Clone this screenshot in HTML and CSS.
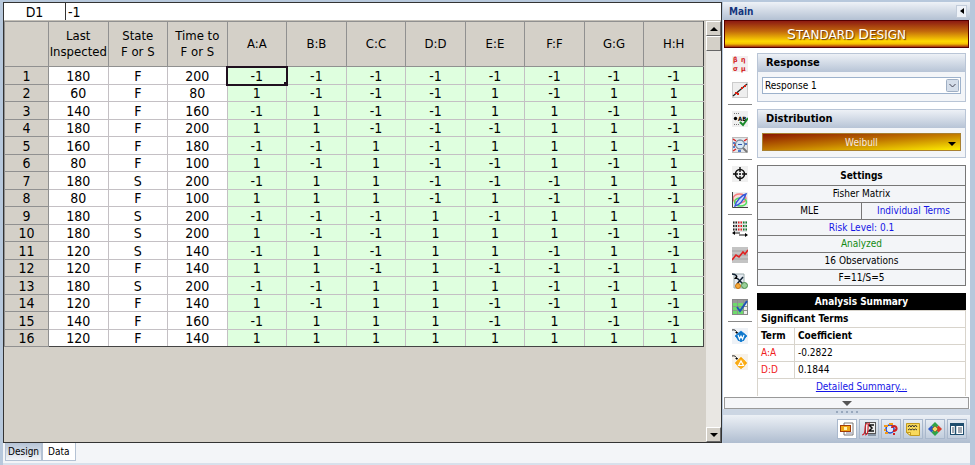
FILE: index.html
```html
<!DOCTYPE html>
<html lang="en">
<head>
  <meta charset="utf-8">
  <title>Standard Design</title>
  <link rel="stylesheet" href="styles.css">
</head>
<body>
  <div class="window">
    <div class="main">
      <section class="sheet">
        <div class="formula-bar">
          <label class="cell-name" for="formula">D1</label>
          <input class="formula" id="formula" type="text" value="-1">
        </div>
        <div class="sheet-body">
          <div class="grid-area">
            <table class="grid">
              <thead>
                <tr><th class="corner"></th><th>Last<br>Inspected</th><th>State<br>F or S</th><th>Time to<br>F or S</th><th>A:A</th><th>B:B</th><th>C:C</th><th>D:D</th><th>E:E</th><th>F:F</th><th>G:G</th><th>H:H</th></tr>
              </thead>
              <tbody>
                <tr><th>1</th><td>180</td><td>F</td><td>200</td><td class="selected">-1</td><td>-1</td><td>-1</td><td>-1</td><td>-1</td><td>-1</td><td>-1</td><td>-1</td></tr>
                <tr><th>2</th><td>60</td><td>F</td><td>80</td><td>1</td><td>-1</td><td>-1</td><td>-1</td><td>1</td><td>-1</td><td>1</td><td>1</td></tr>
                <tr><th>3</th><td>140</td><td>F</td><td>160</td><td>-1</td><td>1</td><td>-1</td><td>-1</td><td>1</td><td>1</td><td>-1</td><td>1</td></tr>
                <tr><th>4</th><td>180</td><td>F</td><td>200</td><td>1</td><td>1</td><td>-1</td><td>-1</td><td>-1</td><td>1</td><td>1</td><td>-1</td></tr>
                <tr><th>5</th><td>160</td><td>F</td><td>180</td><td>-1</td><td>-1</td><td>1</td><td>-1</td><td>1</td><td>1</td><td>1</td><td>-1</td></tr>
                <tr><th>6</th><td>80</td><td>F</td><td>100</td><td>1</td><td>-1</td><td>1</td><td>-1</td><td>-1</td><td>1</td><td>-1</td><td>1</td></tr>
                <tr><th>7</th><td>180</td><td>S</td><td>200</td><td>-1</td><td>1</td><td>1</td><td>-1</td><td>-1</td><td>-1</td><td>1</td><td>1</td></tr>
                <tr><th>8</th><td>80</td><td>F</td><td>100</td><td>1</td><td>1</td><td>1</td><td>-1</td><td>1</td><td>-1</td><td>-1</td><td>-1</td></tr>
                <tr><th>9</th><td>180</td><td>S</td><td>200</td><td>-1</td><td>-1</td><td>-1</td><td>1</td><td>-1</td><td>1</td><td>1</td><td>1</td></tr>
                <tr><th>10</th><td>180</td><td>S</td><td>200</td><td>1</td><td>-1</td><td>-1</td><td>1</td><td>1</td><td>1</td><td>-1</td><td>-1</td></tr>
                <tr><th>11</th><td>120</td><td>S</td><td>140</td><td>-1</td><td>1</td><td>-1</td><td>1</td><td>1</td><td>-1</td><td>1</td><td>-1</td></tr>
                <tr><th>12</th><td>120</td><td>F</td><td>140</td><td>1</td><td>1</td><td>-1</td><td>1</td><td>-1</td><td>-1</td><td>-1</td><td>1</td></tr>
                <tr><th>13</th><td>180</td><td>S</td><td>200</td><td>-1</td><td>-1</td><td>1</td><td>1</td><td>1</td><td>-1</td><td>-1</td><td>1</td></tr>
                <tr><th>14</th><td>120</td><td>F</td><td>140</td><td>1</td><td>-1</td><td>1</td><td>1</td><td>-1</td><td>-1</td><td>1</td><td>-1</td></tr>
                <tr><th>15</th><td>140</td><td>F</td><td>160</td><td>-1</td><td>1</td><td>1</td><td>1</td><td>-1</td><td>1</td><td>-1</td><td>-1</td></tr>
                <tr><th>16</th><td>120</td><td>F</td><td>140</td><td>1</td><td>1</td><td>1</td><td>1</td><td>1</td><td>1</td><td>1</td><td>1</td></tr>
              </tbody>
            </table>
          </div>
          <div class="scrollbar">
            <button class="scroll-button" aria-label="Scroll up"><svg width="8" height="4"><path d="M4 0L8 4H0z"/></svg></button>
            <div class="scroll-thumb"></div>
            <div class="scroll-track"></div>
            <button class="scroll-button" aria-label="Scroll down"><svg width="8" height="4"><path d="M0 0H8L4 4z"/></svg></button>
          </div>
        </div>
      </section>

      <aside class="panel">
        <header class="panel-title">
          <span>Main</span>
          <button class="collapse" aria-label="Collapse"><svg width="4" height="6"><path d="M4 0V6L0 3z"/></svg></button>
        </header>
        <h1 class="banner"><span class="cap">S</span>tandard <span class="cap">D</span>esign</h1>

        <div class="panel-body">
          <nav class="tools">
            <button class="tool" aria-label="Parameters">
              <svg width="16" height="18" viewBox="0 0 16 18"><rect y="1" width="16" height="16" fill="#f3efef"/><g class="greek"><text x="1" y="7">β</text><text x="9" y="7">η</text><text x="1" y="16">σ</text><text x="9" y="16">μ</text></g></svg>
            </button>
            <button class="tool" aria-label="Plot">
              <svg width="16" height="16" viewBox="0 0 16 16"><rect x=".5" y=".5" width="15" height="15" fill="#eee" stroke="#ccc"/><path d="M1 14L15 2" stroke="#222" stroke-width="1.3"/><path d="M3 10h2v2H3zM5 11h2v2H5zM9 5h2v2H9zM12 3h2v2h-2z" fill="#d21"/></svg>
            </button>
            <hr>
            <button class="tool" aria-label="Select terms">
              <svg width="16" height="16" viewBox="0 0 16 16"><rect width="16" height="16" fill="#f0f0f0"/><path d="M2 2.500h6M2 13.500h5" stroke="#777" stroke-dasharray="1 1"/><circle cx="3.500" cy="7.500" r="1.700"/><text class="ab" x="6" y="10">AB</text><path d="M8 11l3 3 5-7" fill="none" stroke="#1b8a2b" stroke-width="2"/></svg>
            </button>
            <button class="tool" aria-label="Inspect design">
              <svg width="16" height="16" viewBox="0 0 16 16"><rect x=".5" y=".5" width="15" height="15" fill="#e3e6ea" stroke="#bbb"/><path d="M1 2l3 2M15 2l-3 2M1 14l3-2M2 8h2" stroke="#d22" stroke-width="1.500"/><path d="M1 6h2M13 7h2M1 10h2M6 14h3" stroke="#25b" stroke-width="1.500"/><circle cx="8" cy="7.500" r="4.500" fill="#d5e8f5" stroke="#567"/><path d="M6 7.500h4" stroke="#35a"/><path d="M11 11l4 4" stroke="#777" stroke-width="2"/></svg>
            </button>
            <hr>
            <button class="tool" aria-label="Target">
              <svg width="16" height="16" viewBox="0 0 16 16"><rect width="16" height="16" fill="#f0f0f0"/><circle cx="8" cy="8" r="4.500" fill="none" stroke="#111" stroke-width="1.600"/><path d="M8 1v5M8 10v5M1 8h5M10 8h5" stroke="#111" stroke-width="1.400"/><circle cx="8" cy="8" r="1"/></svg>
            </button>
            <button class="tool" aria-label="Contour plot">
              <svg width="16" height="16" viewBox="0 0 16 16"><rect width="16" height="16" fill="#eee"/><ellipse cx="7.500" cy="6.500" rx="6.500" ry="4.500" fill="#fbdada" stroke="#f47f7f" stroke-width="1.500"/><ellipse cx="8.500" cy="10" rx="6" ry="4" fill="none" stroke="#51dc5b" stroke-width="1.500"/><path d="M3 14C4 9 10 3 14 2C12 7 8 13 3 14z" fill="#cdf" stroke="#3457d8" stroke-width="1.400"/><path d="M.5 0v15.500H16" fill="none" stroke="#444"/></svg>
            </button>
            <hr>
            <button class="tool" aria-label="Transfer columns">
              <svg width="16" height="16" viewBox="0 0 16 16"><rect x="1" width="14" height="11" fill="#e4e4e4"/><path d="M1 1.500h4M1 5h4M1 8.500h4" stroke="#222" stroke-width="2" stroke-dasharray="1.500 1"/><path d="M6 1.500h4M6 5h4M6 8.500h4" stroke="#d22" stroke-width="2" stroke-dasharray="1.500 1"/><path d="M11 1.500h4M11 5h4M11 8.500h4" stroke="#187a30" stroke-width="2" stroke-dasharray="1.500 1"/><path d="M2 12h6M7 14h7" stroke="#111"/><path d="M3 10v4L0 12zM13 12v4l3-2z"/></svg>
            </button>
            <button class="tool" aria-label="Trend">
              <svg width="16" height="16" viewBox="0 0 16 16"><rect width="16" height="16" fill="#c4c4c4"/><path d="M0 4h16M0 8h16M0 12h16" stroke="#a4a4a4"/><path d="M0 13l4-5 3 2 4-5 2 2 3-4" fill="none" stroke="#e02020" stroke-width="1.600"/></svg>
            </button>
            <button class="tool" aria-label="Transfer to X">
              <svg width="16" height="16" viewBox="0 0 16 16"><path d="M2 1h10v14H2z" fill="#e6ebf2" stroke="#9aa"/><path d="M0 1q4 0 5 3M5 5l6 6M11 4l-6 7" fill="none" stroke="#123" stroke-width="1.500"/><path d="M5 2v4H2z"/><circle cx="6" cy="13" r="2.500" fill="#f5a93a" stroke="#c77510"/><circle cx="12.500" cy="12.500" r="3" fill="#9ad09a" stroke="#4c8d4c"/></svg>
            </button>
            <button class="tool" aria-label="Check table">
              <svg width="16" height="16" viewBox="0 0 16 16"><rect x=".5" y=".5" width="15" height="15" fill="#eee" stroke="#888"/><path d="M1 1h14v3H1z" fill="#999"/><path d="M1 4h10v11H1z" fill="#6edb6c"/><path d="M1 7.500h14M1 11.500h14M5.500 1v14M11.500 1v14" stroke="#8a9a8a"/><path d="M5 8l3 4 7-10" fill="none" stroke="#1f55b5" stroke-width="2"/></svg>
            </button>
            <hr>
            <button class="tool" aria-label="Send to Weibull">
              <svg width="16" height="16" viewBox="0 0 16 16"><rect width="16" height="16" fill="#eef2f7"/><path d="M9 3l6 5-6 6-6-6z" fill="#0c6dc4" stroke="#2a8bdc"/><circle cx="9" cy="9" r="4.500" fill="#1179cc"/><path d="M6 7l1.500 4L9 8l1.500 3L12 7" fill="none" stroke="#fff" stroke-width="1.200"/><path d="M0 2q4-1 5 3" fill="none" stroke="#222"/><path d="M3 4h3L5 6z"/></svg>
            </button>
            <button class="tool" aria-label="Send to ALTA">
              <svg width="16" height="16" viewBox="0 0 16 16"><rect width="16" height="16" fill="#f7f2ea"/><path d="M9 3l6 6-6 6-6-6z" fill="#f5a000" stroke="#f8bd45"/><circle cx="9" cy="9.500" r="4.500" fill="#fbad18"/><path d="M6.500 11.500L9 7l2.500 4.500z" fill="none" stroke="#fff" stroke-width="1.200"/><path d="M0 2q4-1 5 3" fill="none" stroke="#222"/><path d="M3 4h3L5 6z"/></svg>
            </button>
          </nav>

          <div class="settings">
            <section class="group">
              <h2><label for="response">Response</label></h2>
              <div class="group-body">
                <div class="select-box">
                  <select id="response"><option>Response 1</option></select>
                  <svg class="chevron" width="13" height="13"><rect x=".5" y=".5" width="12" height="12" rx="1" fill="#d5deea" stroke="#9fafc4"/><path d="M3.500 5l3 3 3-3" fill="none" stroke="#445"/></svg>
                </div>
              </div>
            </section>

            <section class="group">
              <h2>Distribution</h2>
              <div class="group-body">
                <button class="distribution">Weibull<svg class="arrow" width="8" height="4"><path d="M0 0H8L4 4z"/></svg></button>
              </div>
            </section>

            <table class="options">
              <tr><th colspan="2">Settings</th></tr>
              <tr><td colspan="2">Fisher Matrix</td></tr>
              <tr><td>MLE</td><td class="blue">Individual Terms</td></tr>
              <tr><td colspan="2" class="blue">Risk Level: 0.1</td></tr>
              <tr><td colspan="2" class="green">Analyzed</td></tr>
              <tr><td colspan="2">16 Observations</td></tr>
              <tr><td colspan="2">F=11/S=5</td></tr>
            </table>

            <table class="summary">
              <caption>Analysis Summary</caption>
              <tr><th colspan="2">Significant Terms</th></tr>
              <tr><th class="term">Term</th><th>Coefficient</th></tr>
              <tr><td class="red">A:A</td><td>-0.2822</td></tr>
              <tr><td class="red">D:D</td><td>0.1844</td></tr>
              <tr><td colspan="2" class="more"><a href="#">Detailed Summary...</a></td></tr>
            </table>
          </div>
        </div>

        <button class="expand" aria-label="Show more"><svg width="10" height="5"><path d="M0 0H10L5 5z" fill="#555"/></svg></button>
        <div class="gripper"><i></i><i></i><i></i><i></i><i></i></div>
        <div class="pages">
          <button class="page active" aria-label="Main">
            <svg width="14" height="14" viewBox="0 0 14 14"><path d="M4 1h9v12H4z" fill="#fff" stroke="#777"/><path d="M6 11h6" stroke="#88a"/><rect x=".5" y="3.500" width="10" height="6" fill="#f0a818" stroke="#a33c08"/><path d="M4 5h3v3H4z" fill="#fff3b0"/></svg>
          </button>
          <button class="page" aria-label="Analysis">
            <svg width="14" height="14" viewBox="0 0 14 14"><rect x="3.500" y=".5" width="10" height="11" fill="#eee" stroke="#555"/><path d="M12 3H7l3 3-3 3h5" fill="none" stroke="#111" stroke-width="1.500"/><path d="M0 13Q3 13 3 7T6 1M3 13Q6 13 6 7T8 1" fill="none" stroke="#d3202c" stroke-width="1.200"/><path d="M6 13h8" stroke="#456"/></svg>
          </button>
          <button class="page" aria-label="Help">
            <svg width="14" height="14" viewBox="0 0 14 14"><circle cx="6" cy="7" r="4" fill="#dfe9fb" stroke="#2549c8" stroke-width="1.500"/><path d="M0 4h4M1 11h3M5 2h4M0 8h2" stroke="#f59a14" stroke-width="2"/><path d="M8 6q0-2 2-2t2.500 2T10 9v1" fill="none" stroke="#cf2020" stroke-width="2"/><path d="M9 11h2v2H9z" fill="#cf2020"/></svg>
          </button>
          <button class="page" aria-label="Notes">
            <svg width="14" height="14" viewBox="0 0 14 14"><path d="M.5 1.500h13v12h-9l-4-3z" fill="#f8d95c" stroke="#c29a20"/><path d="M4.500 13.500v-3h-4z" fill="#fff0a8" stroke="#c29a20"/><path d="M2 5l1.500-2L5 5l1.500-2L8 5l1.500-2L11 5M2 8l1.500-1L5 8l1.500-1L8 8l1.500-1L11 8" fill="none" stroke="#333"/></svg>
          </button>
          <button class="page" aria-label="Folios">
            <svg width="14" height="14" viewBox="0 0 14 14"><path d="M7 0l3.500 3.500L7 7 3.500 3.500z" fill="#2fa349"/><path d="M3.500 3.500L7 7l-3.500 3.500L0 7z" fill="#2b58c4"/><path d="M10.500 3.500L14 7l-3.500 3.500L7 7z" fill="#d83a24"/><path d="M7 7l3.500 3.500L7 14l-3.500-3.500z" fill="#2fa349"/><path d="M7 4l3 3-3 3-3-3z" fill="#f4d66b" stroke="#7a5a10" stroke-width=".6"/></svg>
          </button>
          <button class="page" aria-label="Columns">
            <svg width="14" height="14" viewBox="0 0 14 14"><rect x=".5" y="1.500" width="13" height="11" fill="#fff" stroke="#1f4e6e"/><path d="M0 2.500h14" stroke="#1f4e6e" stroke-width="3"/><path d="M5.500 3v10" stroke="#1f4e6e" stroke-width="1.500"/><path d="M2 6h2M2 8h2M2 10h2M8 6h4M8 8h4M8 10h4" stroke="#456"/></svg>
          </button>
        </div>
      </aside>
    </div>

    <footer class="tabs">
      <button class="tab">Design</button>
      <button class="tab current">Data</button>
    </footer>
  </div>
</body>
</html>
```

FILE: styles.css
```css
* {
  box-sizing: border-box;
}
body {
  margin: 0;
  background: #b7c8dc;
  color: #000;
  font-family: "DejaVu Sans Condensed", "DejaVu Sans", sans-serif;
  font-size: 10px;
}
button, input, select {
  margin: 0;
  padding: 0;
  border: 0;
  border-radius: 0;
  color: inherit;
  font: inherit;
}
button {
  display: flex;
  align-items: center;
  justify-content: center;
  background: none;
}
svg {
  display: block;
}
table {
  border-collapse: collapse;
}
.window {
  display: flex;
  flex-direction: column;
  min-height: 100vh;
  padding: 2px 2px 0 3px;
}
.main {
  display: flex;
  flex: 1;
}

/* spreadsheet */
.sheet {
  display: flex;
  flex: 1;
  flex-direction: column;
  min-width: 0;
  border: 1px solid #333;
  background: #d4d0c8;
}
.formula-bar {
  display: flex;
  height: 18px;
  border-bottom: 1px solid #c4c0b8;
  background: #fff;
  font-size: 14px;
}
.cell-name {
  width: 61px;
  line-height: 18px;
  text-align: center;
}
.formula {
  flex: 1;
  min-width: 0;
  padding-left: 2px;
  border-left: 1px solid #333;
}
.sheet-body {
  display: flex;
  flex: 1;
}
.grid-area {
  flex: 1;
  padding-right: 2px;
}
.grid {
  width: 100%;
  table-layout: fixed;
  font-size: 14px;
  line-height: 16px;
  border-right: 1px solid #444;
  border-bottom: 1px solid #444;
}
.grid th, .grid td {
  padding: 0;
  border: 1px solid #c4c0c4;
  font-weight: normal;
  text-align: center;
}
.grid thead th {
  height: 45px;
  border-color: #909090;
  font-size: 13px;
}
.grid .corner {
  width: 44px;
}
.grid tbody tr {
  height: 18px;
}
.grid tbody tr:nth-child(even) {
  height: 17px;
}
.grid tbody th {
  border-color: #909090;
  background: #d4d0c8;
}
.grid td {
  background: #fff;
}
.grid td:nth-child(n+5) {
  background: #dfffdf;
}
.grid tbody tr:last-child td {
  border-bottom-color: #444;
}
.grid th:last-child, .grid td:last-child {
  border-right-color: #444;
}
.grid td.selected {
  position: relative;
  outline: 2px solid #20101f;
  outline-offset: -1px;
}
.selected::after {
  content: "";
  position: absolute;
  right: -2px;
  bottom: -2px;
  width: 4px;
  height: 4px;
  background: #20101f;
}
.scrollbar {
  display: flex;
  flex-direction: column;
  width: 15px;
  background: #e9e7e3;
}
.scroll-button, .scroll-thumb {
  height: 15px;
  border: 1px solid #fff;
  border-right-color: #666;
  border-bottom-color: #666;
  background: #d4d0c8;
}
.scroll-track {
  flex: 1;
}

/* control panel */
.panel {
  display: flex;
  flex-direction: column;
  width: 250px;
  margin-left: 1px;
  border-right: 3px solid #b7c8dc;
  background: #fff;
}
.panel-title {
  display: flex;
  align-items: center;
  justify-content: space-between;
  height: 18px;
  padding: 0 3px 0 6px;
  background: linear-gradient(#eef2f7, #b4c1d3);
  color: #15357c;
  font-weight: bold;
}
.collapse {
  width: 11px;
  height: 13px;
  border: 1px solid #c2ccda;
  background: #eef2f8;
}
.banner {
  height: 28px;
  margin: 0 1px;
  border: 1px solid #500;
  background: linear-gradient(#8c1a12, #c36a0c 40%, #ffd800 78%, #f5bf00 88%, #a02a10);
  color: #fff;
  font: 12px/27px "DejaVu Sans", sans-serif;
  text-align: center;
  text-shadow: 1px 1px 1px #653010;
  text-transform: uppercase;
}
.banner .cap {
  font-size: 14px;
}
.panel-body {
  display: flex;
  flex: 1;
  padding: 3px 3px 0 5px;
}
.tools {
  width: 24px;
  flex: none;
}
.tool {
  width: 100%;
  height: 26px;
}
.tools hr {
  margin: 1px 0;
  border: 0;
  border-top: 1px solid #888;
}
.greek {
  fill: #d32020;
  font-size: 7px;
  font-weight: bold;
}
.ab {
  font-size: 6px;
  font-weight: bold;
}
.settings {
  display: flex;
  flex: 1;
  flex-direction: column;
  gap: 7px;
  padding: 2px 1px 0 5px;
}
.group {
  border: 1px solid #b9c5d6;
  background: #f3f5f8;
}
.group h2 {
  height: 18px;
  margin: 0;
  padding-left: 8px;
  background: linear-gradient(#edf1f6, #b7c4d6);
  font-size: 11px;
  line-height: 18px;
}
.group-body {
  height: 29px;
  padding: 5px 4px;
}
.select-box {
  position: relative;
}
.select-box select {
  display: block;
  width: 100%;
  height: 17px;
  padding-left: 2px;
  border: 1px solid #9db2cc;
  background: #fff;
  appearance: none;
}
.chevron {
  position: absolute;
  top: 2px;
  right: 2px;
  pointer-events: none;
}
.distribution {
  position: relative;
  width: 100%;
  height: 18px;
  border: 1px solid #a88030;
  background: linear-gradient(to bottom right, #8a1500, #c27a00 50%, #ffef00);
  color: #f5e9e0;
}
.arrow {
  position: absolute;
  right: 4px;
  bottom: 4px;
  fill: #000;
}
.options {
  width: 100%;
  border: 1px solid #444;
  background: #f3f5f8;
  table-layout: fixed;
  text-align: center;
}
.options tr {
  height: 17px;
}
.options tr:nth-child(3n+1) {
  height: 16px;
}
.options tr:first-child {
  height: 20px;
}
.options th, .options td {
  padding: 0;
  border: 1px solid #777;
  line-height: 14px;
}
.blue {
  color: #1515e6;
}
.green {
  color: #128a12;
}
.red {
  color: #f02020;
}
.summary {
  width: 100%;
  border: 1px solid #888;
  border-bottom: 0;
  line-height: 14px;
}
.summary caption {
  height: 17px;
  background: #000;
  color: #fff;
  font-weight: bold;
  line-height: 17px;
}
.summary tr {
  height: 17px;
}
.summary th, .summary td {
  padding: 0 3px;
  border: 1px solid #d8d4cc;
  text-align: left;
}
.summary .term {
  width: 37px;
}
.summary .more {
  border-bottom: 0;
  text-align: center;
}
.summary a {
  color: #1515e6;
}
.expand {
  height: 12px;
  margin: 0 1px;
  border: 1px solid #999;
  background: #f5f6f8;
}
.gripper {
  display: flex;
  align-items: center;
  justify-content: center;
  gap: 3px;
  height: 6px;
  background: #ccd6e3;
}
.gripper i {
  width: 2px;
  height: 2px;
  background: #98a8bd;
}
.pages {
  display: flex;
  align-items: center;
  justify-content: flex-end;
  gap: 2px;
  height: 28px;
  padding-right: 3px;
  background: linear-gradient(#edf1f6, #afbdd0);
}
.page {
  width: 20px;
  height: 20px;
  border: 1px solid #a9b8cc;
  background: linear-gradient(#e6ecf3, #c2cedd);
}
.page.active {
  background: #fff;
}

/* sheet tabs */
.tabs {
  display: flex;
  height: 22px;
  margin-right: 3px;
  padding: 0 0 2px 2px;
  border-bottom: 2px solid #d8e1ec;
  background: #f3f5f8;
}
.tab {
  padding: 0 2px;
  border: 1px solid #b4c2d4;
  border-top: 0;
  background: linear-gradient(#b5c3d6, #f3f5f8);
}
.tab.current {
  padding: 0 5px;
  background: #fff;
}
```
